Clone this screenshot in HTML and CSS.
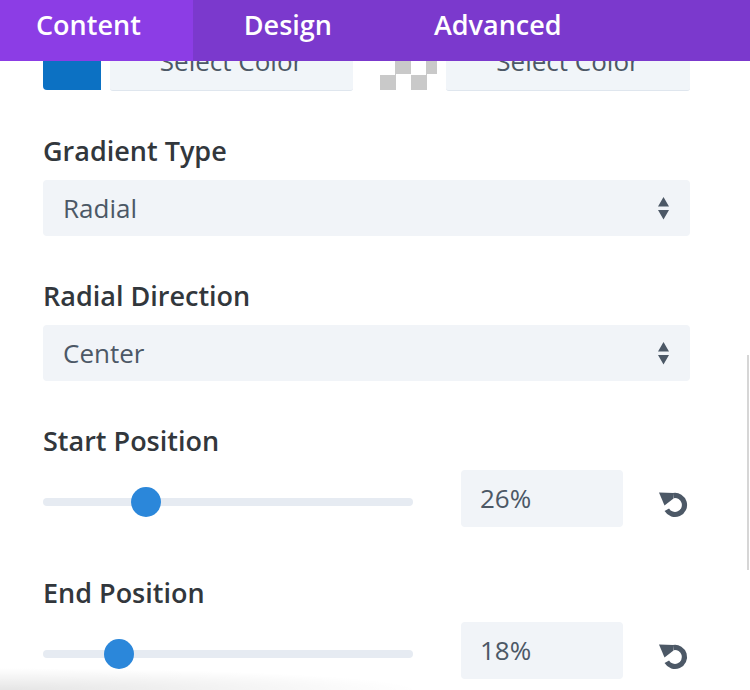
FILE: index.html
```html
<!DOCTYPE html>
<html>
<head>
<meta charset="utf-8">
<link rel="stylesheet" href="styles.css">
</head>
<body>
<header class="tabs">
  <div class="tab active">Content</div>
  <div class="tab">Design</div>
  <div class="tab">Advanced</div>
</header>

<main class="panel">
  <div class="color-row">
    <div class="color-group">
      <div class="swatch swatch-blue"></div>
      <div class="color-btn">Select Color</div>
    </div>
    <div class="color-group">
      <div class="swatch swatch-checker"></div>
      <div class="color-btn">Select Color</div>
    </div>
  </div>

  <section class="field">
    <div class="label">Gradient Type</div>
    <div class="select">
      <span>Radial</span>
      <svg class="arrows" width="11" height="23" viewBox="0 0 11 23"><path d="M5.5 0 L11 9.5 H0 Z M0 13 H11 L5.5 22.5 Z" fill="#4c5866"/></svg>
    </div>
  </section>

  <section class="field">
    <div class="label">Radial Direction</div>
    <div class="select">
      <span>Center</span>
      <svg class="arrows" width="11" height="23" viewBox="0 0 11 23"><path d="M5.5 0 L11 9.5 H0 Z M0 13 H11 L5.5 22.5 Z" fill="#4c5866"/></svg>
    </div>
  </section>

  <section class="field field-slider">
    <div class="label">Start Position</div>
    <div class="slider-row">
      <div class="track"><div class="thumb" style="left: 88px"></div></div>
      <div class="value">26%</div>
      <svg class="reset" width="32" height="30" viewBox="0 0 32 30"><path d="M15.4 5.6 A9.5 9.5 0 1 1 8.8 19.8" fill="none" stroke="#4c5866" stroke-width="5.2"/><path d="M1 2.5 L15.5 3 L15.5 8.6 L6.5 15.5 Z" fill="#4c5866"/></svg>
    </div>
  </section>

  <section class="field field-slider">
    <div class="label">End Position</div>
    <div class="slider-row">
      <div class="track"><div class="thumb" style="left: 61px"></div></div>
      <div class="value">18%</div>
      <svg class="reset" width="32" height="30" viewBox="0 0 32 30"><path d="M15.4 5.6 A9.5 9.5 0 1 1 8.8 19.8" fill="none" stroke="#4c5866" stroke-width="5.2"/><path d="M1 2.5 L15.5 3 L15.5 8.6 L6.5 15.5 Z" fill="#4c5866"/></svg>
    </div>
  </section>
</main>

<div class="scroll-line"></div>
<div class="bottom-shade"></div>
</body>
</html>
```

FILE: styles.css
```css
* { box-sizing: border-box; }

html, body {
  margin: 0;
  padding: 0;
  background: #ffffff;
  font-family: "Open Sans", "Noto Sans", sans-serif;
  overflow: hidden;
}

body {
  width: 750px;
  height: 690px;
  position: relative;
}

.tabs {
  position: fixed;
  top: 0;
  left: 0;
  width: 750px;
  height: 61px;
  display: flex;
  background: #7b39cd;
  z-index: 5;
}

.tab {
  padding: 0 51px;
  color: #ffffff;
  font-size: 27px;
  font-weight: 600;
  line-height: 49px;
}

.tab.active {
  background: #8c3de5;
  padding-left: 36px;
  padding-right: 52px;
}

.panel {
  padding: 34px 60px 0 43px;
}

.color-row {
  display: flex;
  gap: 27px;
}

.color-group {
  display: flex;
  gap: 9px;
  flex: 1;
}

.swatch {
  width: 58px;
  height: 56px;
  flex: none;
}

.swatch-blue {
  background: #0c71c3;
  border-radius: 0 0 0 4px;
}

.swatch-checker {
  width: 57px;
  background-image: conic-gradient(#c9c9c9 0 90deg, transparent 90deg 180deg, #c9c9c9 180deg 270deg, transparent 270deg);
  background-size: 31px 31px;
  background-position: left bottom;
}

.color-btn {
  flex: 1;
  height: 57px;
  background: #f1f5f9;
  border-bottom: 1px solid #dfe6ee;
  border-radius: 0 0 3px 3px;
  color: #4c5866;
  font-size: 26px;
  line-height: 54px;
  text-align: center;
}

.field {
  margin-top: 47px;
}

.field-slider {
  padding-bottom: 6px;
}

.label {
  color: #32373c;
  font-size: 27px;
  font-weight: 600;
  line-height: 30px;
  margin-top: -2px;
  margin-bottom: 14px;
}

.select {
  height: 56px;
  background: #f1f4f8;
  border-radius: 4px;
  display: flex;
  align-items: center;
  justify-content: space-between;
  padding: 0 21px 0 20px;
  color: #4c5866;
  font-size: 26px;
}

.slider-row {
  display: flex;
  align-items: center;
  height: 57px;
}

.track {
  width: 370px;
  height: 8px;
  margin-top: 6px;
  background: #e6ebf2;
  border-radius: 4px;
  position: relative;
  flex: none;
}

.thumb {
  position: absolute;
  top: -11px;
  width: 30px;
  height: 30px;
  border-radius: 50%;
  background: #2b87da;
}

.value {
  margin-left: 48px;
  width: 162px;
  height: 57px;
  background: #f1f4f8;
  border-radius: 4px;
  padding-left: 19px;
  color: #4c5866;
  font-size: 26px;
  line-height: 57px;
  flex: none;
}

.reset {
  margin-left: 35px;
  margin-top: 13px;
  flex: none;
}

.scroll-line {
  position: absolute;
  left: 747px;
  top: 355px;
  width: 2px;
  height: 215px;
  background: #d6d6d6;
}

.bottom-shade {
  position: absolute;
  left: 0;
  bottom: 0;
  width: 420px;
  height: 22px;
  background: radial-gradient(ellipse 100% 100% at 0% 100%, rgba(0,0,0,0.10), rgba(0,0,0,0) 100%);
  pointer-events: none;
}
```
